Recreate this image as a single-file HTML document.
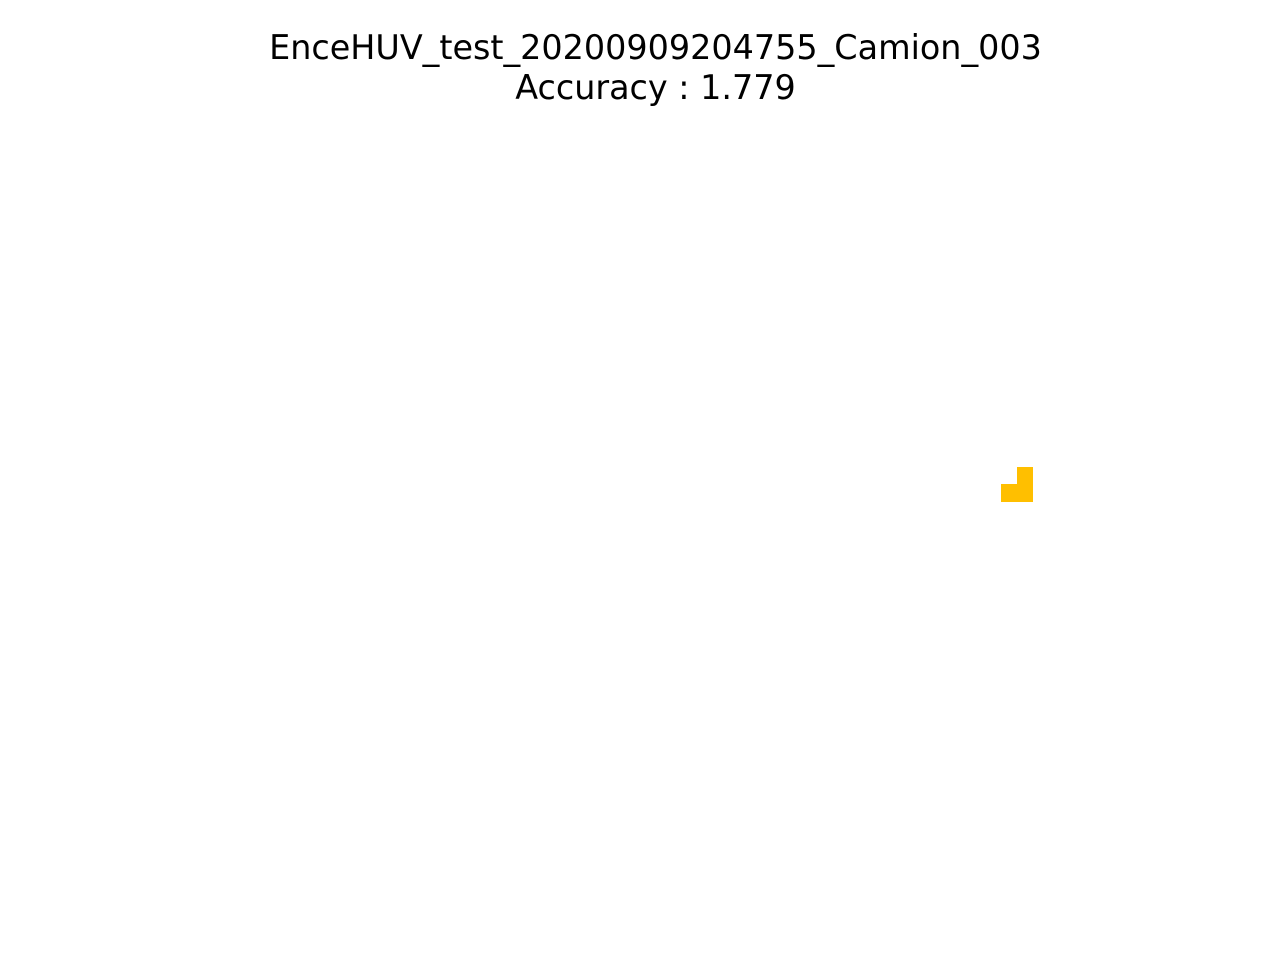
<!DOCTYPE html>
<html><head><style>
body{margin:0;width:1280px;height:960px;background:#fff;position:relative;overflow:hidden}
.t{position:absolute;left:0;width:1311px;text-align:center;font-family:"DejaVu Sans",sans-serif;font-size:33.4px;color:#000;line-height:40px;white-space:nowrap}
.r{position:absolute;background:#ffbf00}
</style></head><body>
<div class="t" style="top:28px">EnceHUV_test_20200909204755_Camion_003<br>Accuracy : 1.779</div>
<div class="r" style="left:1017px;top:467px;width:16px;height:35px"></div>
<div class="r" style="left:1001px;top:484px;width:16px;height:18px"></div>
</body></html>
